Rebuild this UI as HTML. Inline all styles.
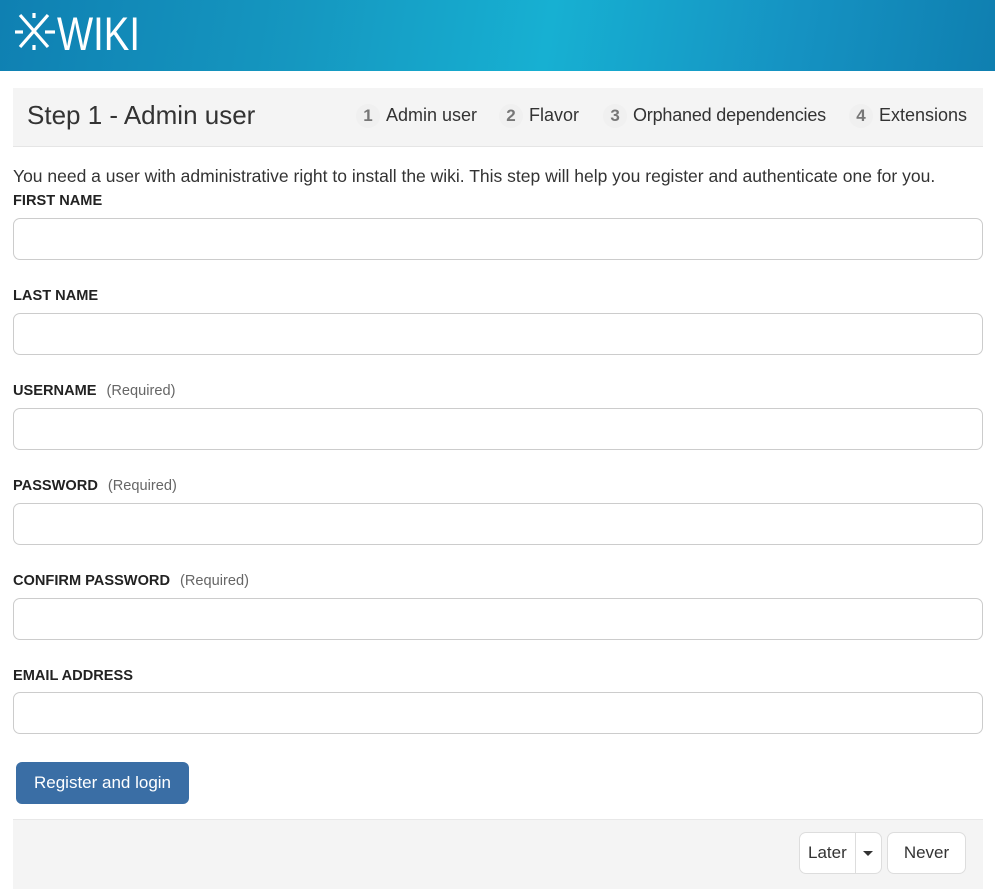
<!DOCTYPE html>
<html><head><meta charset="utf-8"><style>
*{box-sizing:border-box;margin:0;padding:0}
body{width:995px;height:889px;overflow:hidden;background:#fff;font-family:"Liberation Sans",sans-serif;color:#333;position:relative}
.hdr{position:absolute;left:0;top:0;width:995px;height:71px;background:linear-gradient(100deg,#0f80b2 0%,#1597c0 30%,#17b0d2 55%,#1592c2 80%,#0f7fb0 100%)}
.a{position:absolute}
.bar{left:13px;top:88px;width:970px;height:59px;background:#f4f4f4;border-bottom:1px solid #e5e5e5}
.lbl{position:absolute;left:13px;font-size:14.6px;font-weight:bold;color:#222}
.lbl span{font-weight:normal;color:#666;font-size:14.6px;margin-left:10px}
.inp{position:absolute;left:13px;width:970px;height:42px;border:1px solid #ccc;border-radius:7px;background:#fff}
.step{position:absolute;top:104px;font-size:18px;color:#333}
.step b{display:inline-block;width:24px;height:24px;border-radius:12px;background:#f0f0f0;color:#777;text-align:center;font-weight:bold;font-size:17px;line-height:24px;margin-right:6px}
</style></head><body>
<div class="hdr">
<svg class="a" style="left:12px;top:10px" width="140" height="44" viewBox="0 0 140 44">
<g stroke="#fff" stroke-width="3.2" fill="none" stroke-linecap="butt">
<line x1="8" y1="5" x2="36" y2="37"/><line x1="36" y1="5" x2="8" y2="37"/>
<line x1="3" y1="22" x2="11" y2="22"/><line x1="33" y1="22" x2="43" y2="22"/>
<line x1="22" y1="3" x2="22" y2="8"/><line x1="22" y1="35" x2="22" y2="40"/>
</g>
<text x="45" y="40" fill="#fff" font-family="Liberation Sans" font-size="47" textLength="83" lengthAdjust="spacingAndGlyphs">WIKI</text>
</svg>
</div>
<div class="a bar"></div>
<div class="a" style="left:27px;top:100px;font-size:26px;color:#333">Step 1 - Admin user</div>
<div class="step" style="left:356px"><b>1</b>Admin user</div>
<div class="step" style="left:499px"><b>2</b>Flavor</div>
<div class="step" style="left:603px;letter-spacing:-0.2px"><b>3</b>Orphaned dependencies</div>
<div class="step" style="left:849px"><b>4</b>Extensions</div>
<div class="a" style="left:13px;top:166px;font-size:17.5px;color:#333">You need a user with administrative right to install the wiki. This step will help you register and authenticate one for you.</div>
<div class="lbl" style="top:193px">FIRST NAME</div><div class="inp" style="top:218px"></div>
<div class="lbl" style="top:288px">LAST NAME</div><div class="inp" style="top:313px"></div>
<div class="lbl" style="top:383px">USERNAME<span>(Required)</span></div><div class="inp" style="top:408px"></div>
<div class="lbl" style="top:478px">PASSWORD<span>(Required)</span></div><div class="inp" style="top:503px"></div>
<div class="lbl" style="top:573px">CONFIRM PASSWORD<span>(Required)</span></div><div class="inp" style="top:598px"></div>
<div class="lbl" style="top:668px">EMAIL ADDRESS</div><div class="inp" style="top:692px"></div>
<div class="a" style="left:16px;top:762px;width:173px;height:42px;background:#3a6ea5;border-radius:6px;color:#fff;font-size:17px;line-height:42px;text-align:center">Register and login</div>
<div class="a" style="left:13px;top:819px;width:970px;height:70px;background:#f4f4f4;border-top:1px solid #e8e8e8"></div>
<div class="a" style="left:799px;top:832px;width:83px;height:42px;background:#fff;border:1px solid #ddd;border-radius:7px"></div>
<div class="a" style="left:855px;top:832px;width:1px;height:42px;background:#ddd"></div>
<div class="a" style="left:808px;top:843px;font-size:17px;color:#333">Later</div>
<div class="a" style="left:863px;top:851px;width:0;height:0;border-left:5px solid transparent;border-right:5px solid transparent;border-top:5px solid #333"></div>
<div class="a" style="left:887px;top:832px;width:79px;height:42px;background:#fff;border:1px solid #ddd;border-radius:7px;font-size:17px;line-height:40px;text-align:center;color:#333">Never</div>
</body></html>
